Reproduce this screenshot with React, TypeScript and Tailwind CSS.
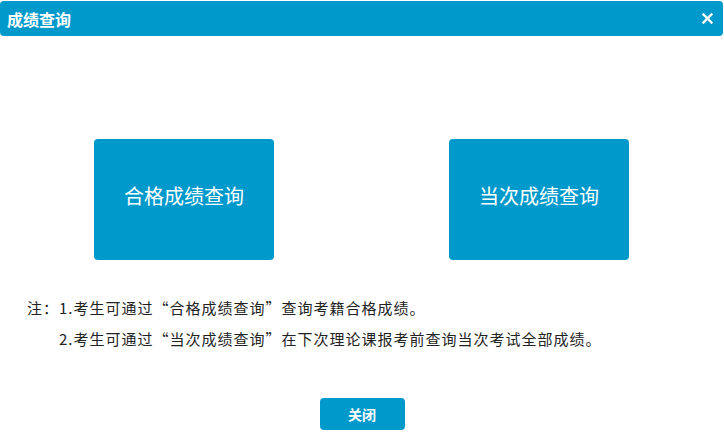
import React from "react";

const font = "font-['Microsoft_YaHei','Noto_Sans_CJK_SC',sans-serif]";

const QueryCard = ({ label }: { label: string }) => (
  <button className="flex h-[121px] w-[180px] items-center justify-center rounded bg-[#0099cc] pb-2 text-[20px] text-white">
    {label}
  </button>
);

export default function App() {
  return (
    <div className={`h-[447px] w-[724px] overflow-hidden bg-white ${font}`}>
      <div className="mt-px mr-px flex h-[35px] items-center justify-between rounded bg-[#0099cc] pl-[7px] pr-[10px]">
        <span className="text-[16px] font-bold leading-none text-white">成绩查询</span>
        <svg width="11" height="11" viewBox="0 0 11 11" className="text-white">
          <path d="M1.5 1.5 L9.5 9.5 M9.5 1.5 L1.5 9.5" stroke="currentColor" strokeWidth="2.4" strokeLinecap="square" />
        </svg>
      </div>

      <div className="mt-[103px] flex justify-between pl-[94px] pr-[95px]">
        <QueryCard label="合格成绩查询" />
        <QueryCard label="当次成绩查询" />
      </div>

      <div className="mt-[32px] flex pl-[27px] text-[15px] leading-[31px] tracking-[1px] text-[#222]">
        <span>注：</span>
        <div>
          <p>1.考生可通过“合格成绩查询”查询考籍合格成绩。</p>
          <p>2.考生可通过“当次成绩查询”在下次理论课报考前查询当次考试全部成绩。</p>
        </div>
      </div>

      <div className="mt-[44px] flex justify-center">
        <button className="h-[32px] w-[85px] rounded-sm bg-[#0099cc] text-[14px] font-bold text-white">
          关闭
        </button>
      </div>
    </div>
  );
}
